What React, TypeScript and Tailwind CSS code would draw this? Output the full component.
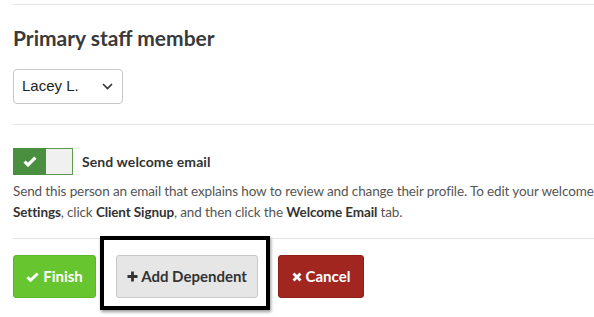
import React from "react";

const font = { fontFamily: 'Lato, "Liberation Sans", sans-serif' };

export default function App() {
  return (
    <div className="w-[594px] h-[317px] overflow-hidden bg-white text-[#333]" style={font}>
      <div className="w-[760px] pl-[13px]">
        <div className="h-[4px]" />
        <div className="border-t border-[#e5e5e5]" />
        <h2 className="mt-[20px] text-[21px] leading-[26px] font-bold text-[#3a3a3a]">
          Primary staff member
        </h2>
        <div className="mt-[18px] w-[110px] h-[35px] border border-[#c8c8c8] rounded-[4px] flex items-center justify-between pl-[8px] pr-[9px]">
          <span className="text-[15px] text-[#222]" style={{ fontFamily: '"Liberation Sans", Arial, sans-serif' }}>Lacey L.</span>
          <svg width="11" height="7" viewBox="0 0 11 7" fill="none">
            <path d="M1 1l4.5 4.5L10 1" stroke="#333" strokeWidth="1.6" />
          </svg>
        </div>
        <div className="mt-[20px] border-t border-[#e5e5e5]" />
        <div className="mt-[23px] flex items-center">
          <div className="flex w-[60px] h-[27px]">
            <div className="w-[33px] h-full bg-[#4a8f3f] flex items-center justify-center">
              <svg width="14" height="11" viewBox="0 0 14 11">
                <path d="M1.6 5.6l3.4 3.3L12.4 1.6" stroke="#fff" strokeWidth="3.2" fill="none" />
              </svg>
            </div>
            <div className="flex-1 h-full bg-[#f0f0f0] border border-[#5a9b4e] border-l-0" />
          </div>
          <span className="ml-[9px] text-[14px] font-bold text-[#333] tracking-[0.1px]">Send welcome email</span>
        </div>
        <div className="mt-[6px] text-[13.5px] leading-[21px] text-[#555] tracking-[-0.12px]">
          <div className="whitespace-nowrap">
            Send this person an email that explains how to review and change their profile. To edit your welcome email, go to
          </div>
          <div className="whitespace-nowrap">
            <b className="font-bold text-[#333]">Settings</b>, click <b className="font-bold text-[#333]">Client Signup</b>, and then click the{" "}
            <b className="font-bold text-[#333]">Welcome Email</b> tab.
          </div>
        </div>
        <div className="mt-[15px] border-t border-[#e5e5e5]" />
        <div className="mt-[16px] flex items-center">
          <button className="w-[83px] h-[43px] rounded-[3px] bg-[#67c52f] border border-[#5cb82a] text-white text-[15px] font-bold flex items-center justify-center gap-[4px]">
            <svg width="13" height="10" viewBox="0 0 13 10">
              <path d="M1.4 5.2l3.2 3.1L11.6 1.5" stroke="#fff" strokeWidth="2.9" fill="none" />
            </svg>
            Finish
          </button>
          <div className="relative ml-[20px]">
            <div className="absolute -left-[16px] -top-[19px] w-[170px] h-[74px] border-[4px] border-black shadow-[1px_2px_3px_rgba(0,0,0,0.4)]" />
            <button className="relative w-[142px] h-[43px] rounded-[3px] bg-[#e6e6e6] border border-[#c8c8c8] text-[#333] text-[15px] font-bold flex items-center justify-center gap-[3px]">
              <svg width="11" height="11" viewBox="0 0 11 11">
                <path d="M5.5 0.5v10M0.5 5.5h10" stroke="#333" strokeWidth="2.8" />
              </svg>
              Add Dependent
            </button>
          </div>
          <button className="ml-[20px] w-[86px] h-[43px] rounded-[3px] bg-[#a0261f] border border-[#8f1f19] text-white text-[15px] font-bold flex items-center justify-center gap-[4px]">
            <svg width="10" height="10" viewBox="0 0 10 10">
              <path d="M1.5 1.5l7 7M8.5 1.5l-7 7" stroke="#fff" strokeWidth="2.8" />
            </svg>
            Cancel
          </button>
        </div>
      </div>
    </div>
  );
}
